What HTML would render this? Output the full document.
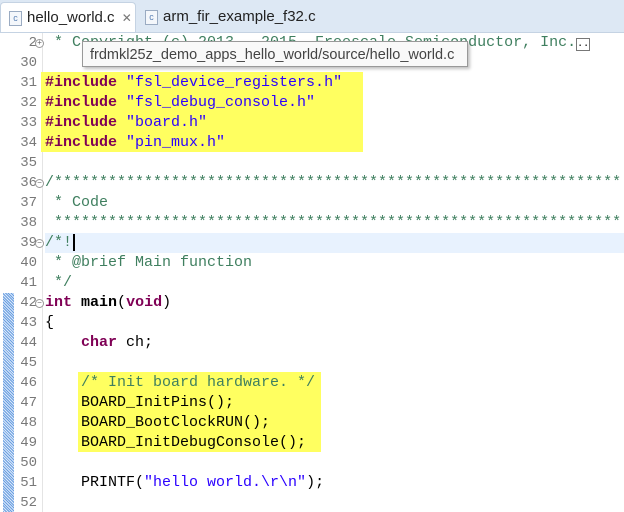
<!DOCTYPE html><html><head><style>
body{margin:0;width:624px;height:512px;overflow:hidden;background:#fff;font-family:"Liberation Sans",sans-serif;position:relative}
.tabs{position:absolute;left:0;top:0;width:624px;height:32px;background:#dde8f4;border-bottom:1px solid #c5d3e3}
.tab{position:absolute;top:2px;height:30px;font-size:15px;line-height:30px;color:#222}
.ic{display:inline-block;width:11px;height:13px;border:1px solid #9aabc2;background:#f4f7fb;font-size:9px;line-height:13px;text-align:center;color:#5a80b5;vertical-align:middle;margin-right:5px}
.code{position:absolute;left:0;top:33px;width:624px;height:479px;overflow:hidden;font-family:"Liberation Mono",monospace;font-size:15px}
.ln{position:absolute;left:0;width:37px;text-align:right;color:#787878;height:20px;line-height:20px;font-size:14px}
.l{position:absolute;left:45px;height:20px;line-height:20px;white-space:pre;color:#000}
.c{color:#3f7f5f}.k{color:#7f0055;font-weight:bold}.s{color:#2a00ff}
.y{position:absolute;background:#ffff60}
.f{position:absolute;left:35px;width:7px;height:7px;border:1px solid #999;border-radius:50%;font-size:8px;line-height:7px;text-align:center;color:#666;background:#fff}
</style></head><body>
<div class="tabs">
<div class="tab" style="left:0;width:136px;background:#fff;border:1px solid #c5d3e3;border-bottom:none;border-radius:4px 4px 0 0;padding-left:8px;box-sizing:border-box"><span class="ic">c</span>hello_world.c <span style="font-size:12px;color:#777;margin-left:3px">✕</span></div>
<div class="tab" style="left:137px;padding-left:8px"><span class="ic">c</span>arm_fir_example_f32.c</div>
</div>
<div style="position:absolute;left:42px;top:33px;width:1px;height:479px;background:#e4e4e4"></div>
<div style="position:absolute;left:3px;top:293px;width:11px;height:219px;background:repeating-linear-gradient(45deg,#6a9fe0 0 1px,#dbe8fa 1px 2px)"></div>
<div class="y" style="left:41px;top:72px;width:322px;height:80px"></div>
<div class="y" style="left:78px;top:372px;width:243px;height:80px"></div>
<div style="position:absolute;left:45px;top:233px;width:579px;height:20px;background:#e8f2fe"></div>
<div class="code">
<div class="ln" style="top:0">2</div><div class="l" style="top:0"><span class="c"> * Copyright (c) 2013 - 2015, Freescale Semiconductor, Inc.</span><span style="border:1px solid #777;font-size:10px">..</span></div>
<div class="ln" style="top:20px">30</div>
<div class="ln" style="top:40px">31</div><div class="l" style="top:40px"><span class="k">#include</span> <span class="s">"fsl_device_registers.h"</span></div>
<div class="ln" style="top:60px">32</div><div class="l" style="top:60px"><span class="k">#include</span> <span class="s">"fsl_debug_console.h"</span></div>
<div class="ln" style="top:80px">33</div><div class="l" style="top:80px"><span class="k">#include</span> <span class="s">"board.h"</span></div>
<div class="ln" style="top:100px">34</div><div class="l" style="top:100px"><span class="k">#include</span> <span class="s">"pin_mux.h"</span></div>
<div class="ln" style="top:120px">35</div>
<div class="ln" style="top:140px">36</div><div class="l c" style="top:140px">/***************************************************************</div>
<div class="ln" style="top:160px">37</div><div class="l c" style="top:160px"> * Code</div>
<div class="ln" style="top:180px">38</div><div class="l c" style="top:180px"> ***************************************************************</div>
<div class="ln" style="top:200px">39</div><div class="l c" style="top:200px">/*!<span style="border-left:2px solid #000;margin-left:1px"></span></div>
<div class="ln" style="top:220px">40</div><div class="l c" style="top:220px"> * @brief Main function</div>
<div class="ln" style="top:240px">41</div><div class="l c" style="top:240px"> */</div>
<div class="ln" style="top:260px">42</div><div class="l" style="top:260px"><span class="k">int</span> <b>main</b>(<span class="k">void</span>)</div>
<div class="ln" style="top:280px">43</div><div class="l" style="top:280px">{</div>
<div class="ln" style="top:300px">44</div><div class="l" style="top:300px">    <span class="k">char</span> ch;</div>
<div class="ln" style="top:320px">45</div>
<div class="ln" style="top:340px">46</div><div class="l c" style="top:340px">    /* Init board hardware. */</div>
<div class="ln" style="top:360px">47</div><div class="l" style="top:360px">    BOARD_InitPins();</div>
<div class="ln" style="top:380px">48</div><div class="l" style="top:380px">    BOARD_BootClockRUN();</div>
<div class="ln" style="top:400px">49</div><div class="l" style="top:400px">    BOARD_InitDebugConsole();</div>
<div class="ln" style="top:420px">50</div>
<div class="ln" style="top:440px">51</div><div class="l" style="top:440px">    PRINTF(<span class="s">"hello world.\r\n"</span>);</div>
<div class="ln" style="top:460px">52</div>
<div class="f" style="top:6px">+</div><div class="f" style="top:146px">−</div><div class="f" style="top:206px">−</div><div class="f" style="top:266px">−</div>
</div>
<div style="position:absolute;left:82px;top:41px;width:386px;height:26px;background:#f9f9f9;border:1px solid #999;box-shadow:2px 2px 3px rgba(0,0,0,.25);font-size:14.5px;line-height:26px;padding-left:7px;box-sizing:border-box;color:#444">frdmkl25z_demo_apps_hello_world/source/hello_world.c</div>
</body></html>
